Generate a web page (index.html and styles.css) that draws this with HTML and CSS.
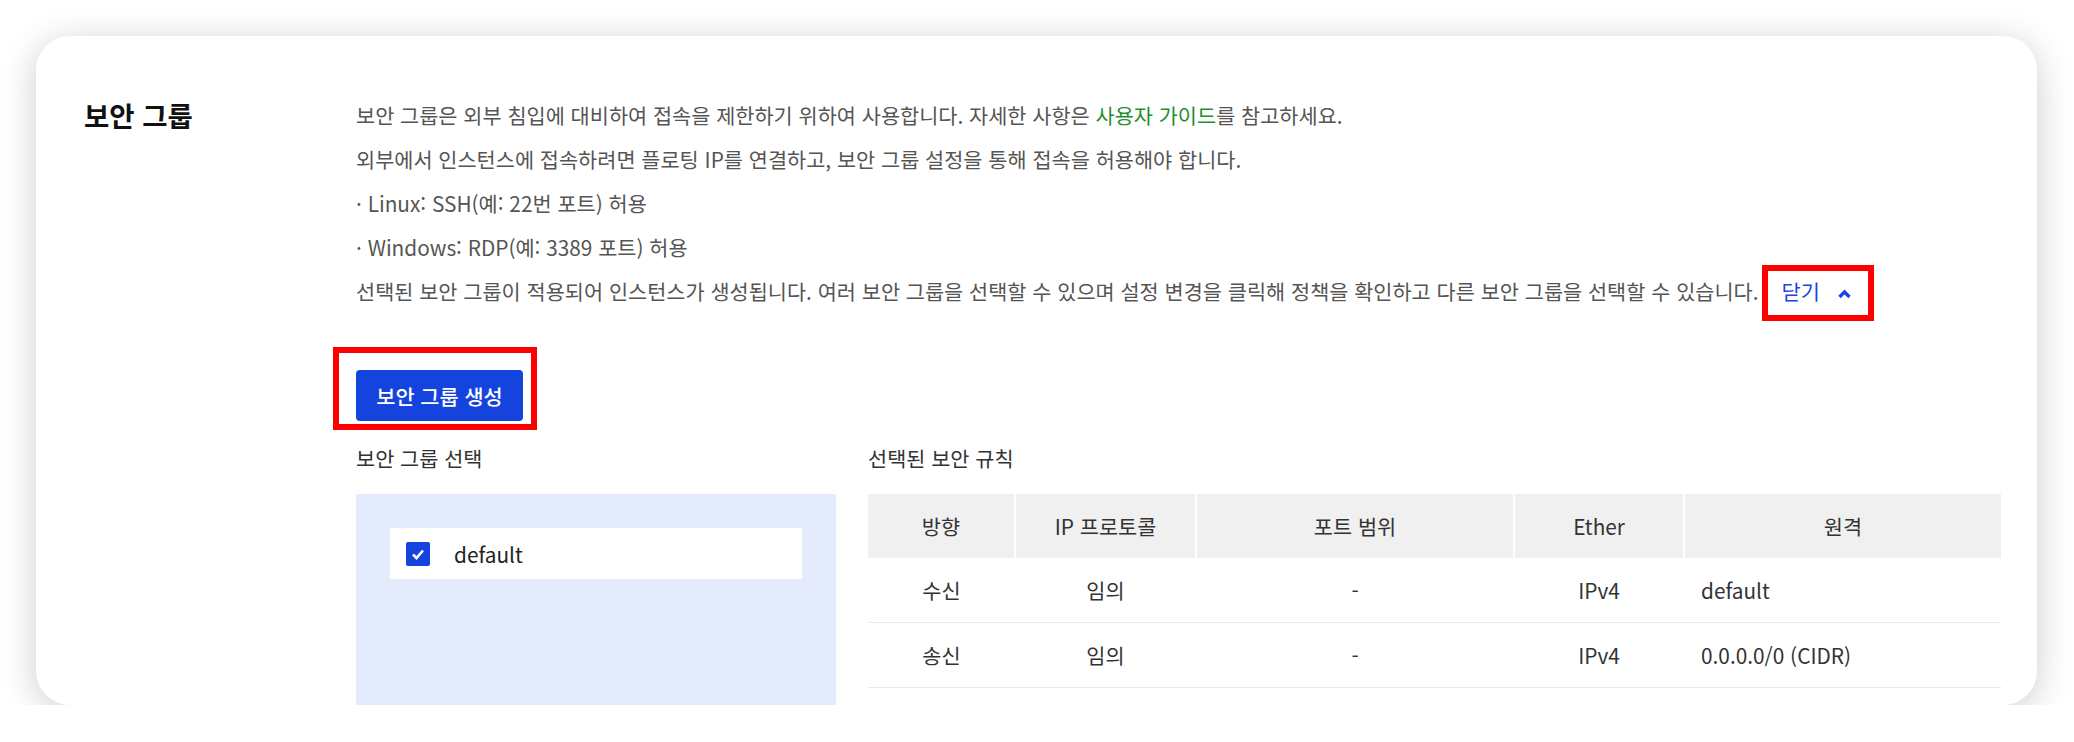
FILE: index.html
```html
<!DOCTYPE html>
<html lang="ko">
<head>
    <meta charset="UTF-8">
    <meta name="viewport" content="width=device-width, initial-scale=1.0">
    <title>보안 그룹</title>
    <link rel="stylesheet" href="styles.css">
</head>
<body>
    <section class="card">
        <h2 class="section-title">보안 그룹</h2>

        <div class="section-body">
            <div class="desc">
                <p>보안 그룹은 외부 침입에 대비하여 접속을 제한하기 위하여 사용합니다. 자세한 사항은 <a class="guide-link" href="#">사용자 가이드</a>를 참고하세요.</p>
                <p>외부에서 인스턴스에 접속하려면 플로팅 IP를 연결하고, 보안 그룹 설정을 통해 접속을 허용해야 합니다.</p>
                <p>· Linux: SSH(예: 22번 포트) 허용</p>
                <p>· Windows: RDP(예: 3389 포트) 허용</p>
                <p>선택된 보안 그룹이 적용되어 인스턴스가 생성됩니다. 여러 보안 그룹을 선택할 수 있으며 설정 변경을 클릭해 정책을 확인하고 다른 보안 그룹을 선택할 수 있습니다.<span class="mark close-mark"><button class="toggle-btn" type="button">닫기<svg class="chevron" width="15" height="10" viewBox="0 0 15 10"><polyline points="2.5,8 7.5,3 12.5,8" fill="none" stroke="#1746e0" stroke-width="3.4"/></svg></button></span></p>
            </div>

            <div class="mark create-mark">
                <button class="primary-btn" type="button">보안 그룹 생성</button>
            </div>

            <div class="panels">
                <div class="group-select">
                    <h3 class="sub-title">보안 그룹 선택</h3>
                    <div class="group-list">
                        <label class="group-item">
                            <span class="check">
                                <svg width="16" height="16" viewBox="0 0 16 16"><polyline points="3,8.5 6.5,12 13,4.5" fill="none" stroke="#fff" stroke-width="2.6"/></svg>
                            </span>
                            default
                        </label>
                    </div>
                </div>

                <div class="rules">
                    <h3 class="sub-title">선택된 보안 규칙</h3>
                    <table class="rule-table">
                        <colgroup>
                            <col style="width: 147px">
                            <col style="width: 181px">
                            <col style="width: 318px">
                            <col style="width: 170px">
                            <col>
                        </colgroup>
                        <thead>
                            <tr>
                                <th>방향</th>
                                <th>IP 프로토콜</th>
                                <th>포트 범위</th>
                                <th>Ether</th>
                                <th>원격</th>
                            </tr>
                        </thead>
                        <tbody>
                            <tr>
                                <td>수신</td>
                                <td>임의</td>
                                <td>-</td>
                                <td>IPv4</td>
                                <td class="left">default</td>
                            </tr>
                            <tr>
                                <td>송신</td>
                                <td>임의</td>
                                <td>-</td>
                                <td>IPv4</td>
                                <td class="left">0.0.0.0/0 (CIDR)</td>
                            </tr>
                        </tbody>
                    </table>
                </div>
            </div>
        </div>
    </section>
</body>
</html>
```

FILE: styles.css
```css
body {
    margin: 0;
    padding: 36px 37px 0 36px;
    background-color: #fff;
    font-family: "Noto Sans CJK KR", "Noto Sans", sans-serif;
    font-size: 20.8px;
    color: #333;
}
.card {
    display: grid;
    grid-template-columns: 272px 1fr;
    height: 669px;
    box-sizing: border-box;
    padding: 57px 36px 0 48px;
    background-color: #fff;
    border-radius: 34px;
    box-shadow: 0 6px 36px rgba(0,0,0,0.2);
    overflow: hidden;
}
.section-title {
    margin: 0;
    font-size: 27.5px;
    font-weight: 700;
    line-height: 44px;
    color: #111;
}
.desc p {
    margin: 0;
    line-height: 44px;
    color: #555;
    white-space: nowrap;
}
.guide-link {
    color: #1f8f2f;
    text-decoration: none;
}
.mark {
    border: 6px solid #ff0000;
}
.close-mark {
    display: inline-block;
    margin: -4px 0 -8px 3px;
    padding: 0 16px 4px 14px;
    line-height: 40px;
}
.toggle-btn {
    padding: 0;
    border: none;
    background: none;
    font: inherit;
    color: #1746e0;
    cursor: pointer;
}
.chevron {
    margin-left: 17px;
    vertical-align: 1px;
}
.create-mark {
    display: inline-block;
    margin: 34px 0 0 -23px;
    padding: 17px 8px 3px 17px;
}
.primary-btn {
    display: block;
    width: 167px;
    height: 51px;
    padding: 0;
    border: none;
    border-radius: 4px;
    background-color: #1443de;
    color: #fff;
    font: inherit;
    font-weight: 500;
    cursor: pointer;
}
.panels {
    display: grid;
    grid-template-columns: 480px 1fr;
    gap: 32px;
    margin-top: 14px;
}
.sub-title {
    margin: 0 0 22px;
    font-size: 20.8px;
    font-weight: 400;
    line-height: 28px;
    color: #333;
}
.group-list {
    height: 300px;
    padding: 34px;
    background-color: #e3ebfd;
}
.group-item {
    display: flex;
    align-items: center;
    gap: 24px;
    height: 51px;
    padding-left: 16px;
    background-color: #fff;
    color: #222;
}
.check {
    display: flex;
    align-items: center;
    justify-content: center;
    width: 24px;
    height: 24px;
    border-radius: 2px;
    background-color: #1443de;
}
.rule-table {
    width: 100%;
    table-layout: fixed;
    border-collapse: collapse;
}
.rule-table th {
    height: 64px;
    padding: 0;
    background-color: #f0f0f0;
    font-weight: 400;
    color: #333;
}
.rule-table th + th {
    border-left: 2px solid #fff;
}
.rule-table td {
    height: 64px;
    padding: 0;
    text-align: center;
    border-bottom: 1px solid #e8e8e8;
    color: #333;
}
.rule-table td.left {
    text-align: left;
    padding-left: 17px;
}
```
